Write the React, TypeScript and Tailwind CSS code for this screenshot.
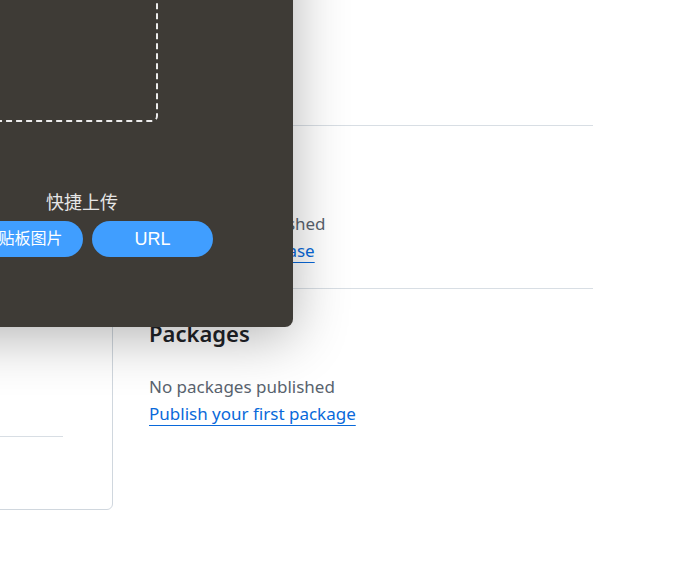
const SANS = "font-['Noto_Sans','Open_Sans',sans-serif]"

function SidebarSection({ title, empty, action }: { title: string; empty: string; action: string }) {
  return (
    <div className="h-[163px] border-b border-[#d8dee4] pt-[32px]">
      <h2 className="text-[22px] leading-[24px] font-semibold text-[#1f2328]">{title}</h2>
      <p className="mt-[28px] text-[17px] leading-[27px] text-[#59636e]">{empty}</p>
      <a href="#" className="block w-fit text-[17px] leading-[27px] text-[#0969da] underline underline-offset-[5px] decoration-1">
        {action}
      </a>
    </div>
  )
}

export default function App() {
  return (
    <div className={`relative w-[700px] h-[581px] overflow-hidden bg-white ${SANS}`}>
      {/* page behind the upload window */}
      <div className="flex items-start">
        <div className="-ml-[300px] w-[413px] h-[510px] shrink-0 rounded-md border border-[#d0d7de] flex flex-col justify-end pb-[72px]">
          <div className="border-t border-[#d8dee4] mr-[49px]" />
        </div>

        <div className="ml-[36px] w-[444px] shrink-0">
          <div className="h-[126px] border-b border-[#d8dee4]" />
          <SidebarSection title="Releases" empty="No releases published" action="Create a new release" />
          <div className="pt-[32px]">
            <h2 className="text-[22px] leading-[24px] font-semibold text-[#1f2328]">Packages</h2>
            <p className="mt-[28px] text-[17px] leading-[27px] text-[#59636e]">No packages published</p>
            <a href="#" className="block w-fit text-[17px] leading-[27px] text-[#0969da] underline underline-offset-[5px] decoration-1">
              Publish your first package
            </a>
          </div>
        </div>
      </div>

      {/* upload window */}
      <div className="absolute -left-[300px] -top-[200px] w-[593px] h-[527px] rounded-lg bg-[#3e3b36] shadow-[0_10px_55px_rgba(0,0,0,0.3)] font-['Liberation_Sans','Noto_Sans_CJK_SC',sans-serif]">
        <div className="mt-[122px] ml-[58px] w-[400px] h-[200px] rounded-md border-2 border-dashed border-[#ececec]" />
        <div className="ml-[262px] w-[251px] mt-[69px]">
          <div className="pr-[11px] text-center text-[18px] leading-[24px] text-[#e6e6e6]">快捷上传</div>
          <div className="mt-[6px] flex gap-[9px]">
            <button className="w-[121px] h-[36px] rounded-full bg-[#409eff] text-white text-[16px]">剪贴板图片</button>
            <button className="w-[121px] h-[36px] rounded-full bg-[#409eff] text-white text-[18px]">URL</button>
          </div>
        </div>
      </div>
    </div>
  )
}
